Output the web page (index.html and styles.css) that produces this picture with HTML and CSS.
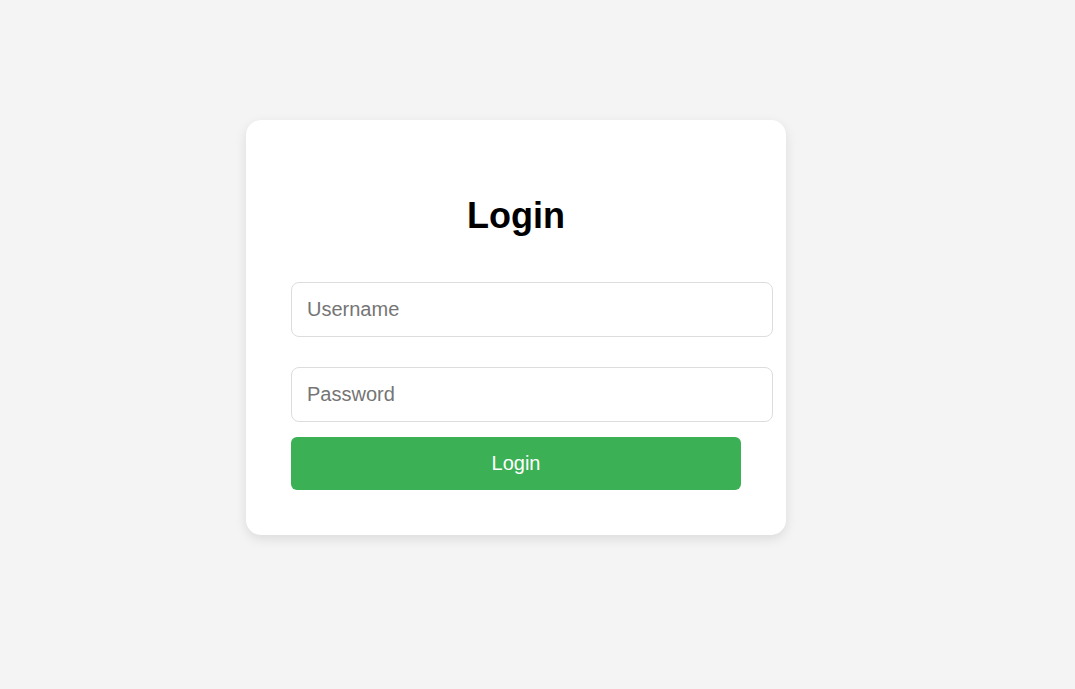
FILE: index.html
```html
<!DOCTYPE html>
<html lang="en">
<head>
<meta charset="utf-8">
<title>Login</title>
<link rel="stylesheet" href="styles.css">
</head>
<body>
<div class="page">
  <div class="card">
    <h2 class="title">Login</h2>
    <form class="form">
      <input class="field" type="text" placeholder="Username">
      <input class="field" type="password" placeholder="Password">
      <button class="btn" type="button">Login</button>
    </form>
  </div>
</div>
</body>
</html>
```
FILE: styles.css
```css
html, body {
  margin: 0;
  padding: 0;
}
body {
  background: #f4f4f4;
  font-family: "Liberation Sans", Arial, sans-serif;
  height: 689px;
  overflow: hidden;
}
.page {
  display: flex;
  justify-content: center;
  align-items: flex-start;
  padding: 120px 43px 0 0;
}
.card {
  width: 450px;
  padding: 45px;
  background: #ffffff;
  border-radius: 15px;
  box-shadow: 0 4px 12px rgba(0, 0, 0, 0.1);
}
.title {
  margin: 30px 0 0 0;
  font-size: 36px;
  line-height: 41px;
  font-weight: bold;
  text-align: center;
  color: #000;
}
.form {
  display: flex;
  flex-direction: column;
  align-items: flex-start;
  margin-top: 46px;
}
.field {
  box-sizing: content-box;
  width: 100%;
  padding: 15px;
  border: 1px solid #dddddd;
  border-radius: 8px;
  font-family: "Liberation Sans", Arial, sans-serif;
  font-size: 20px;
  line-height: 23px;
  height: 23px;
  color: #333;
  background: #fff;
  outline: none;
  margin: 0;
}
.field + .field {
  margin-top: 30px;
}
.field::placeholder {
  color: #757575;
}
.btn {
  width: 100%;
  margin-top: 15px;
  padding: 15px;
  height: 53px;
  border: none;
  border-radius: 6px;
  background: #3bb055;
  color: #ffffff;
  font-family: "Liberation Sans", Arial, sans-serif;
  font-size: 20px;
  line-height: 23px;
  cursor: pointer;
}
```
